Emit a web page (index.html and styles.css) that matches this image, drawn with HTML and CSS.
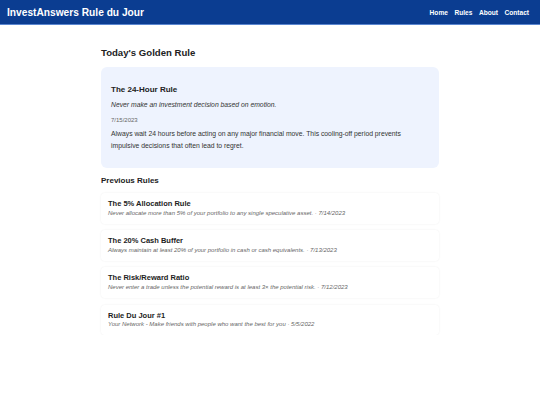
FILE: index.html
```html
<!DOCTYPE html>
<html>
<head>
<meta charset="utf-8">
<link rel="stylesheet" href="styles.css">
</head>
<body>
<header class="topbar">
  <div class="brand">InvestAnswers Rule du Jour</div>
  <nav class="nav">
    <a href="#">Home</a>
    <a href="#">Rules</a>
    <a href="#">About</a>
    <a href="#">Contact</a>
  </nav>
</header>
<main class="container">
  <h1 class="page-title">Today's Golden Rule</h1>
  <section class="golden">
    <h2 class="golden-title">The 24-Hour Rule</h2>
    <p class="golden-quote">Never make an investment decision based on emotion.</p>
    <p class="golden-date">7/15/2023</p>
    <p class="golden-body">Always wait 24 hours before acting on any major financial move. This cooling-off period prevents impulsive decisions that often lead to regret.</p>
  </section>
  <h2 class="section-title">Previous Rules</h2>
  <ul class="rules">
    <li class="rule">
      <div class="rule-title">The 5% Allocation Rule</div>
      <div class="rule-meta">Never allocate more than 5% of your portfolio to any single speculative asset. · 7/14/2023</div>
    </li>
    <li class="rule">
      <div class="rule-title">The 20% Cash Buffer</div>
      <div class="rule-meta">Always maintain at least 20% of your portfolio in cash or cash equivalents. · 7/13/2023</div>
    </li>
    <li class="rule">
      <div class="rule-title">The Risk/Reward Ratio</div>
      <div class="rule-meta">Never enter a trade unless the potential reward is at least 3× the potential risk. · 7/12/2023</div>
    </li>
    <li class="rule">
      <div class="rule-title">Rule Du Jour #1</div>
      <div class="rule-meta">Your Network - Make friends with people who want the best for you · 5/5/2022</div>
    </li>
  </ul>
</main>
</body>
</html>
```
FILE: styles.css
```css
* { box-sizing: border-box; }
html, body { margin: 0; padding: 0; background: #fff; }
body { font-family: "Liberation Sans", Arial, sans-serif; color: #222; }
.topbar {
  height: 25px;
  background: #0b3d91;
  border-bottom: 1px solid #5a86d0;
  display: flex;
  align-items: center;
  justify-content: space-between;
  padding: 0 11px 0 7px;
  color: #fff;
}
.brand { font-size: 10.2px; font-weight: bold; }
.nav { display: flex; gap: 6.5px; }
.nav a { color: #fff; text-decoration: none; font-size: 6.6px; font-weight: bold; }
.container { width: 338px; margin: 0 auto; padding-top: 22px; }
.page-title { font-size: 9.6px; line-height: 11px; margin: 0 0 8.5px; font-weight: bold; color: #222; }
.golden {
  background: #eef3fe;
  border-radius: 6px;
  padding: 18px 10px 17px;
}
.golden-title { font-size: 8px; line-height: 9.2px; margin: 0 0 7.5px; font-weight: bold; color: #222; }
.golden-quote { font-size: 6.8px; line-height: 7.8px; font-style: italic; margin: 0 0 7.5px; color: #333; }
.golden-date { font-size: 6px; line-height: 6.9px; margin: 0 0 4.5px; color: #666; }
.golden-body { font-size: 6.8px; line-height: 11.7px; margin: 0; color: #333; }
.section-title { font-size: 8px; line-height: 9.2px; margin: 8px 0 7.4px; font-weight: bold; color: #222; }
.rules { list-style: none; margin: 0; padding: 0; display: flex; flex-direction: column; gap: 6.7px; }
.rule {
  padding: 7px 7px 7px;
  border-radius: 4px;
  box-shadow: 0 0 2px rgba(0,0,0,0.08);
  background: #fff;
}
.rule-title { font-size: 7.5px; line-height: 8.6px; font-weight: bold; color: #222; margin-bottom: 1px; }
.rule-meta { font-size: 6px; line-height: 7px; font-style: italic; color: #666; }
```
